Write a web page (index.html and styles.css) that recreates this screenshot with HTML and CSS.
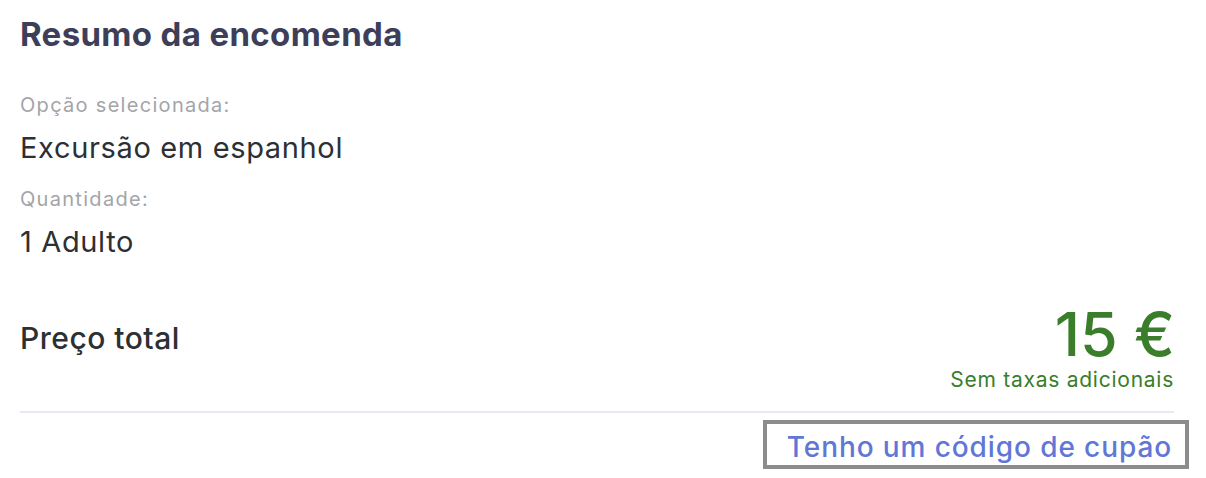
FILE: index.html
```html
<!DOCTYPE html>
<html lang="pt">
<head>
<meta charset="utf-8">
<link rel="stylesheet" href="styles.css">
</head>
<body>
<section class="summary">
  <h2 class="title">Resumo da encomenda</h2>
  <div class="field">
    <div class="label">Opção selecionada:</div>
    <div class="value">Excursão em espanhol</div>
  </div>
  <div class="field">
    <div class="label">Quantidade:</div>
    <div class="value">1 Adulto</div>
  </div>
  <div class="total">
    <div class="total-label">Preço total</div>
    <div class="total-price">
      <div class="amount">15 €</div>
      <div class="fees">Sem taxas adicionais</div>
    </div>
  </div>
  <div class="divider"></div>
  <div class="coupon-row">
    <button class="coupon">Tenho um código de cupão</button>
  </div>
</section>
</body>
</html>
```
FILE: styles.css
```css
* { box-sizing: border-box; }
html, body { margin: 0; padding: 0; background: #fff; }
body {
  font-family: Inter, "Noto Sans", sans-serif;
  width: 1206px;
  height: 478px;
  overflow: hidden;
}
.summary {
  padding: 14px 32px 0 20px;
}
.title {
  margin: 0;
  font-size: 33px;
  font-weight: 700;
  color: #3d3f5a;
  line-height: 40px;
  letter-spacing: 0.35px;
}
.field + .field { margin-top: 21px; }
.title + .field { margin-top: 39px; }
.label {
  font-size: 20px;
  line-height: 24px;
  color: #a3a5a9;
  letter-spacing: 1.3px;
}
.value {
  font-size: 29px;
  line-height: 36px;
  color: #2c3033;
  margin-top: 13px;
  letter-spacing: 0.65px;
}
.total {
  display: flex;
  justify-content: space-between;
  align-items: flex-start;
  margin-top: 41px;
}
.total-label {
  font-size: 30px;
  line-height: 36px;
  font-weight: 500;
  color: #2c3033;
  margin-top: 19px;
  letter-spacing: 0.5px;
}
.total-price { text-align: right; }
.amount {
  font-size: 61px;
  font-weight: 500;
  color: #3a7d2a;
  line-height: 66px;
  margin-right: -1px;
}
.fees {
  font-size: 21px;
  color: #3a7d2a;
  line-height: 26px;
  letter-spacing: 0.75px;
}
.divider {
  height: 2px;
  background: #e8e9f5;
  margin-top: 18px;
}
.coupon-row {
  display: flex;
  justify-content: flex-end;
  margin-top: 7px;
  margin-right: -15px;
}
.coupon {
  font-family: inherit;
  font-size: 28px;
  font-weight: 500;
  color: #6177d6;
  background: #fff;
  border: 4px solid #8c8c8c;
  padding: 7px 13px 1px 20px;
  line-height: 33px;
  letter-spacing: 0.9px;
  cursor: pointer;
}
```
